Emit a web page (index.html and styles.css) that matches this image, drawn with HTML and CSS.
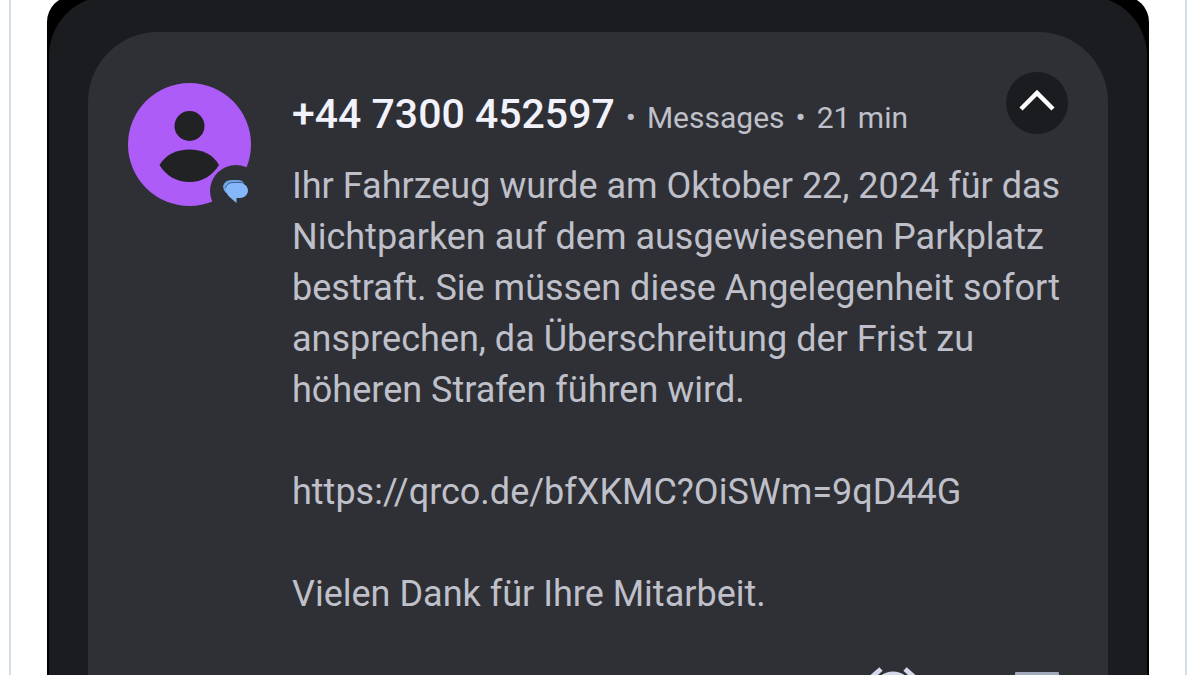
FILE: index.html
```html
<!DOCTYPE html>
<html lang="de">
<head>
    <meta charset="UTF-8">
    <meta name="viewport" content="width=device-width, initial-scale=1.0">
    <title>Messages</title>
    <link rel="stylesheet" href="styles.css">
</head>
<body>
    <div class="post">
        <div class="screen">
            <main class="panel">
                <article class="notification">
                    <!-- Avatar -->
                    <svg class="avatar" viewBox="0 0 124 124" aria-hidden="true">
                        <circle cx="61.500" cy="61.500" r="61.500" fill="#ae5cf7"/>
                        <circle cx="61.500" cy="43" r="15" fill="#202224"/>
                        <path d="M31.500 82C38 71 49 66.500 61.500 66.500S85 71 91 82C84 93 74 99 61.500 99S38 93 31.500 82Z" fill="#202224"/>
                        <circle cx="108" cy="108" r="26" fill="#2f3035"/>
                        <path d="M98 110Q95 107 95 103Q97 97 103 97H110Q114 97 116 100L108 108Z" fill="#6fa3e8"/>
                        <path d="M105 100H111C116 100 120 103 120 107.500C120 112 116 115 112 115H108.500V120L101 113.500C98 110 97 107 98 104C99 101 102 100 105 100Z" fill="#85b7fb"/>
                        <path d="M97.500 105Q99 99.500 105 99.500H115" fill="none" stroke="#42618c" stroke-width="1"/>
                    </svg>

                    <div class="content">
                        <header class="header">
                            <h1>+44 7300 452597</h1>
                            <span>•</span>
                            <span>Messages</span>
                            <span>•</span>
                            <time>21 min</time>
                        </header>
                        <div class="message">
                            <p>Ihr Fahrzeug wurde am Oktober 22, 2024 für das Nichtparken auf dem ausgewiesenen Parkplatz bestraft. Sie müssen diese Angelegenheit sofort ansprechen, da Überschreitung der Frist zu höheren Strafen führen wird.</p>
                            <p><a href="#">https://qrco.de/bfXKMC?OiSWm=9qD44G</a></p>
                            <p>Vielen Dank für Ihre Mitarbeit.</p>
                        </div>
                    </div>

                    <button class="collapse" type="button" aria-label="Einklappen">
                        <svg viewBox="0 0 62 62" aria-hidden="true">
                            <path d="M15 37L31 21L47 37" fill="none" stroke="#fff" stroke-width="4.500"/>
                        </svg>
                    </button>
                </article>

                <!-- Aktionen -->
                <div class="actions">
                    <button type="button" aria-label="Später erinnern">
                        <svg viewBox="0 0 48 48" aria-hidden="true">
                            <g fill="none" stroke="#d5d8ea" stroke-width="5">
                                <circle cx="24" cy="27" r="18"/>
                                <path d="M3 12L12 4M45 12L36 4M24 16V28L32 33"/>
                            </g>
                        </svg>
                    </button>
                    <button type="button" aria-label="Archivieren">
                        <svg viewBox="0 0 48 48" aria-hidden="true">
                            <path d="M4 9H44L46 17V45H2V17Z M4 18H44M24 23V38M17 32L24 39L31 32" fill="none" stroke="#a3a9bd" stroke-width="4"/>
                        </svg>
                    </button>
                </div>
            </main>
        </div>
    </div>
</body>
</html>
```
FILE: styles.css
```css
* {
    margin: 0;
    padding: 0;
    box-sizing: border-box;
}

body {
    font-family: Roboto, Arial, sans-serif;
    background: #fff;
    height: 100vh;
    overflow: hidden;
}

.post {
    margin: -4px 13px 0 9px;
    padding: 0 36px;
    border: 2px solid #d3dfe5;
    border-width: 0 2px;
}

.screen {
    background: #000;
    border-radius: 26px 26px 0 0;
    padding: 0 2px;
}

.panel {
    background: #1b1c20;
    border-radius: 60px 60px 0 0;
    padding: 36px 39px 0;
}

.notification {
    display: flex;
    align-items: flex-start;
    background: #2f3035;
    border-radius: 70px 70px 0 0;
    padding: 40px 40px 0;
}

.avatar {
    flex: none;
    width: 124px;
    height: 124px;
    margin: 11px 40px 0 0;
    overflow: visible;
}

.content {
    flex: 1;
    padding-top: 18px;
    margin-right: -60px;
}

.header {
    display: flex;
    align-items: baseline;
    gap: 11px;
    height: 71px;
    color: #bfc0ca;
    font-size: 30px;
    line-height: 48px;
}

.header h1 {
    color: #f1f2fb;
    font-size: 41px;
    font-weight: 500;
}

.message {
    color: #bfc0ca;
    font-size: 36px;
    line-height: 51px;
}

.message p {
    margin-bottom: 51px;
}

.message p:last-child {
    margin-bottom: 45px;
}

.message a {
    color: inherit;
    text-decoration: none;
}

.collapse {
    flex: none;
    width: 62px;
    height: 62px;
    border: none;
    border-radius: 50%;
    background: #1b1c20;
    cursor: pointer;
}

.collapse svg {
    display: block;
}

.actions {
    display: flex;
    justify-content: flex-end;
    gap: 96px;
    background: #2f3035;
    padding: 0 47px 40px;
}

.actions button {
    width: 48px;
    height: 48px;
    border: none;
    background: none;
    cursor: pointer;
}

.actions svg {
    display: block;
}
```
